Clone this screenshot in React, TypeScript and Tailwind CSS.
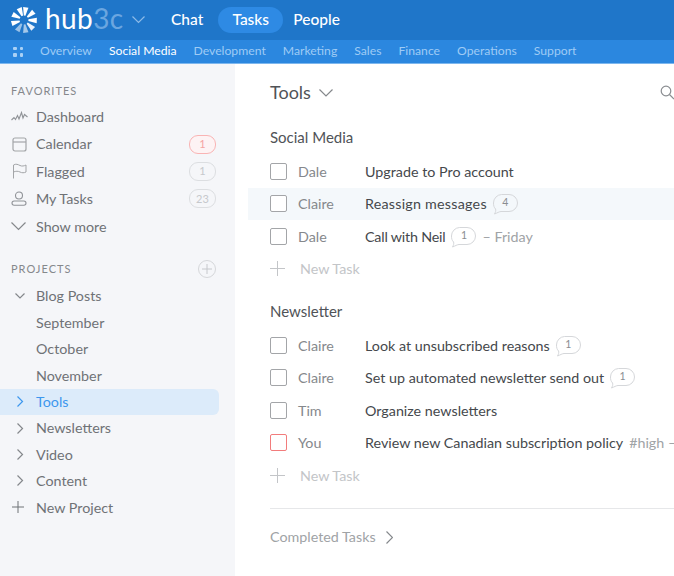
import * as React from "react";

const tabs = ["Overview", "Social Media", "Development", "Marketing", "Sales", "Finance", "Operations", "Support"];

function Logo() {
  const petals = [
    { a: 8, o: 1 },
    { a: 50, o: 1 },
    { a: 92, o: 1 },
    { a: 134, o: 0.9 },
    { a: 172, o: 0.6 },
    { a: 212, o: 0.55 },
    { a: 254, o: 1 },
    { a: 296, o: 1 },
    { a: 338, o: 1 },
  ];
  return (
    <svg width="28" height="28" viewBox="0 0 28 28" className="shrink-0">
      {petals.map((p) => (
        <path
          key={p.a}
          d="M11.3 1.2 L16.7 1.2 L14.8 9.6 L13.2 9.6 Z"
          fill="#fff"
          opacity={p.o}
          transform={`rotate(${p.a} 14 14)`}
        />
      ))}
    </svg>
  );
}

function Down({ w, color, sw = 1.2 }: { w: number; color: string; sw?: number }) {
  const h = w / 2 + 1;
  return (
    <svg width={w} height={h} viewBox={`0 0 ${w} ${h}`} fill="none" stroke={color} strokeWidth={sw} className="shrink-0">
      <path d={`M0.5 0.5 L${w / 2} ${w / 2} L${w - 0.5} 0.5`} />
    </svg>
  );
}

function Right({ h, color, sw = 1.2 }: { h: number; color: string; sw?: number }) {
  const w = h / 2 + 1;
  return (
    <svg width={w} height={h} viewBox={`0 0 ${w} ${h}`} fill="none" stroke={color} strokeWidth={sw} className="shrink-0">
      <path d={`M0.5 0.5 L${h / 2} ${h / 2} L0.5 ${h - 0.5}`} />
    </svg>
  );
}

function PlusMark({ s, color }: { s: number; color: string }) {
  return (
    <svg width={s} height={s} viewBox={`0 0 ${s} ${s}`} stroke={color} strokeWidth="1" className="shrink-0">
      <path d={`M0 ${s / 2} H${s} M${s / 2} 0 V${s}`} />
    </svg>
  );
}

function CountBadge({ n, red }: { n: string; red?: boolean }) {
  return (
    <span
      className={
        red
          ? "w-[27px] h-[19px] rounded-[9px] border border-[#f9b4b4] bg-[#fdf3f4] flex items-center justify-center text-[11px] text-[#f5a3a3]"
          : "w-[27px] h-[19px] rounded-[9px] border border-[#dcdee1] flex items-center justify-center text-[11px] text-[#c6c8cc]"
      }
    >
      {n}
    </span>
  );
}

function Bubble({ n }: { n: string }) {
  return (
    <span className="relative inline-flex w-[25px] h-[19px] ml-[6px] items-center justify-center text-[10.5px] text-[#8a8d91]">
      <svg className="absolute left-0 top-0" width="25" height="21" viewBox="0 0 25 21" fill="none">
        <path
          d="M8.5 0.5 H16 A8.5 8.5 0 0 1 16 17.5 H8 C6.5 17.5 4 19 1.5 20 C2.5 18.5 3 16.5 2.6 15 C1 13.5 0.5 11.5 0.5 9 A8.5 8.5 0 0 1 8.5 0.5 Z"
          stroke="#d5d7da"
        />
      </svg>
      <span className="relative -mt-[1px]">{n}</span>
    </span>
  );
}

function Task({
  who,
  title,
  bubble,
  extra,
  active,
  red,
  titleClass,
}: {
  who: string;
  title: string;
  bubble?: string;
  extra?: string;
  active?: boolean;
  red?: boolean;
  titleClass?: string;
}) {
  return (
    <div className={`h-[32.5px] pl-[22px] flex items-center whitespace-nowrap ${active ? "bg-[#f4f8fb]" : ""}`}>
      <span
        className={`w-[17px] h-[17px] rounded-[2px] border shrink-0 bg-white ${red ? "border-[#f27c7c]" : "border-[#a3a5a8]"}`}
      />
      <span className="w-[67px] ml-[11px] shrink-0 text-[#85888c]">{who}</span>
      <span className={`text-[#45484c] ${titleClass ?? ""}`}>{title}</span>
      {bubble && <Bubble n={bubble} />}
      {extra && <span className="ml-[6px] text-[#a0a3a6]">{extra}</span>}
    </div>
  );
}

function NewTask() {
  return (
    <div className="h-[32.5px] pl-[22px] flex items-center text-[#c3c5c8]">
      <PlusMark s={15} color="#c3c5c8" />
      <span className="ml-[15px]">New Task</span>
    </div>
  );
}

function NavRow({ icon, label, badge }: { icon: React.ReactNode; label: string; badge?: React.ReactNode }) {
  return (
    <div className="h-[27.4px] pl-[11px] pr-[19px] flex items-center text-[#6f7276]">
      <span className="w-[25px] shrink-0 flex items-center">{icon}</span>
      <span className="flex-1">{label}</span>
      {badge}
    </div>
  );
}

function ProjectRow({
  label,
  open,
  active,
  child,
}: {
  label: string;
  open?: boolean;
  active?: boolean;
  child?: boolean;
}) {
  return (
    <div
      className={`h-[26.4px] w-[219px] flex items-center rounded-r-[6px] ${
        active ? "bg-[#dcebfa] text-[#3d97ee]" : "text-[#6f7276]"
      }`}
    >
      <span className={`w-[36px] shrink-0 flex ${open ? "pl-[15px]" : "pl-[17px]"}`}>
        {!child && (open ? <Down w={10} color="#85888c" /> : <Right h={11} color={active ? "#3d97ee" : "#85888c"} />)}
      </span>
      <span>{label}</span>
    </div>
  );
}

export default function App() {
  return (
    <div className="w-[674px] h-[576px] overflow-hidden flex flex-col bg-white font-['Lato',sans-serif] text-[14.3px]">
      <header className="h-[40px] shrink-0 bg-[#1f76c9] flex items-center pl-[10px] text-white">
        <Logo />
        <span className="ml-[7px] w-[87px] text-[28px] leading-none tracking-[0.4px] -mt-[4px]">
          hub<span className="text-[#6ba6e0]">3c</span>
        </span>
        <Down w={13} color="#8dbbe8" />
        <span className="ml-[26px] text-[15.5px] font-medium">Chat</span>
        <span className="ml-[15px] h-[26px] w-[65px] shrink-0 rounded-[13px] bg-[#2e8ae4] flex items-center justify-center text-[15.5px] font-medium">
          Tasks
        </span>
        <span className="ml-[10px] text-[15.5px] font-medium">People</span>
      </header>
      <nav className="h-[24px] shrink-0 bg-[#2b87df] border-b border-[#7db7ee] flex items-center pl-[13px] text-[12.2px] text-[#9fcbf5]">
        <span className="grid grid-cols-2 gap-[3px] w-[10px] mr-[17px]">
          <i className="w-[3.5px] h-[3.5px] bg-[#a9d0f5] rounded-[1px]" />
          <i className="w-[3.5px] h-[3.5px] bg-[#a9d0f5] rounded-[1px]" />
          <i className="w-[3.5px] h-[3.5px] bg-[#a9d0f5] rounded-[1px]" />
          <i className="w-[3.5px] h-[3.5px] bg-[#a9d0f5] rounded-[1px]" />
        </span>
        <div className="flex gap-[17px]">
          {tabs.map((t) => (
            <span key={t} className={t === "Social Media" ? "text-white" : ""}>
              {t}
            </span>
          ))}
        </div>
      </nav>

      <div className="flex flex-1 min-h-0">
        <aside className="w-[235px] shrink-0 bg-[#f5f6f9]">
          <div className="pl-[11px] pt-[19px] h-[39px] text-[11px] tracking-[1px] text-[#85888c]">FAVORITES</div>
          <NavRow
            label="Dashboard"
            icon={
              <svg width="17" height="11" viewBox="0 0 17 11" fill="none" stroke="#909398" strokeWidth="1.1">
                <path d="M0.5 9 L3 6.5 L4.5 8.5 L6.5 4.5 L8 8 L10.5 1.5 L12 7 L13.5 3.5 L16.5 6" />
              </svg>
            }
          />
          <NavRow
            label="Calendar"
            icon={
              <svg width="15" height="15" viewBox="0 0 15 15" fill="none" stroke="#a3a5a8" strokeWidth="1.2" className="ml-[1px]">
                <rect x="1" y="1" width="13" height="13" rx="2" />
                <path d="M1 5 H14" />
              </svg>
            }
            badge={<CountBadge n="1" red />}
          />
          <NavRow
            label="Flagged"
            icon={
              <svg width="15" height="16" viewBox="0 0 15 16" fill="none" stroke="#a3a5a8" strokeWidth="1" className="ml-[1px]">
                <path d="M1.5 15.5 V2 C4 0.5 6 1.5 8 2.5 C10 3.5 12 3 14 2 V9 C12 10 10 10 8 9 C6 8 4 8 1.5 9" />
              </svg>
            }
            badge={<CountBadge n="1" />}
          />
          <NavRow
            label="My Tasks"
            icon={
              <svg width="16" height="15" viewBox="0 0 16 15" fill="none" stroke="#909398" strokeWidth="1.1">
                <circle cx="8" cy="4.5" r="3.5" />
                <rect x="1" y="10" width="14" height="4.2" rx="2.1" />
              </svg>
            }
            badge={<CountBadge n="23" />}
          />
          <NavRow label="Show more" icon={<Down w={15} color="#85888c" />} />
          <div className="mt-[15px] h-[28px] pl-[11px] pr-[19px] flex items-center justify-between text-[11px] tracking-[1px] text-[#85888c]">
            <span>PROJECTS</span>
            <span className="w-[18px] h-[18px] rounded-full border border-[#d5d7da] flex items-center justify-center">
              <PlusMark s={10} color="#c6c8cc" />
            </span>
          </div>
          <ProjectRow label="Blog Posts" open />
          <ProjectRow label="September" child />
          <ProjectRow label="October" child />
          <ProjectRow label="November" child />
          <ProjectRow label="Tools" active />
          <ProjectRow label="Newsletters" />
          <ProjectRow label="Video" />
          <ProjectRow label="Content" />
          <div className="h-[26.4px] pl-[12px] flex items-center text-[#6f7276]">
            <PlusMark s={12} color="#6f7276" />
            <span className="ml-[12px]">New Project</span>
          </div>
        </aside>

        <main className="flex-1 min-w-0 pl-[13px]">
          <div className="h-[57px] pl-[22px] flex items-center justify-between">
            <div className="flex items-center text-[18px] text-[#505357]">
              Tools
              <span className="ml-[8px]">
                <Down w={14} color="#85888c" />
              </span>
            </div>
            <svg width="15" height="15" viewBox="0 0 15 15" fill="none" stroke="#8a8d91" strokeWidth="1.2" className="-mr-[1px]">
              <circle cx="6" cy="6" r="4.8" />
              <path d="M9.5 9.5 L14 14" />
            </svg>
          </div>

          <div className="pl-[22px] h-[34px] pb-[1px] flex items-center text-[15px] text-[#505357]">Social Media</div>
          <Task who="Dale" title="Upgrade to Pro account" />
          <Task who="Claire" title="Reassign messages" bubble="4" active titleClass="tracking-[0.23px]" />
          <Task who="Dale" title="Call with Neil" bubble="1" extra="– Friday" titleClass="tracking-[-0.2px]" />
          <NewTask />

          <div className="pl-[22px] h-[33px] mt-[11px] pb-[2px] flex items-center text-[15px] text-[#505357]">Newsletter</div>
          <Task who="Claire" title="Look at unsubscribed reasons" bubble="1" />
          <Task who="Claire" title="Set up automated newsletter send out" bubble="1" />
          <Task who="Tim" title="Organize newsletters" />
          <Task who="You" title="Review new Canadian subscription policy" extra="#high –" red />
          <NewTask />

          <div className="ml-[22px] mt-[16px] border-t border-[#e6e7e9] h-[58px] flex items-center text-[#a0a3a6]">
            Completed Tasks
            <span className="ml-[10px]">
              <Right h={13} color="#85888c" />
            </span>
          </div>
        </main>
      </div>
    </div>
  );
}
